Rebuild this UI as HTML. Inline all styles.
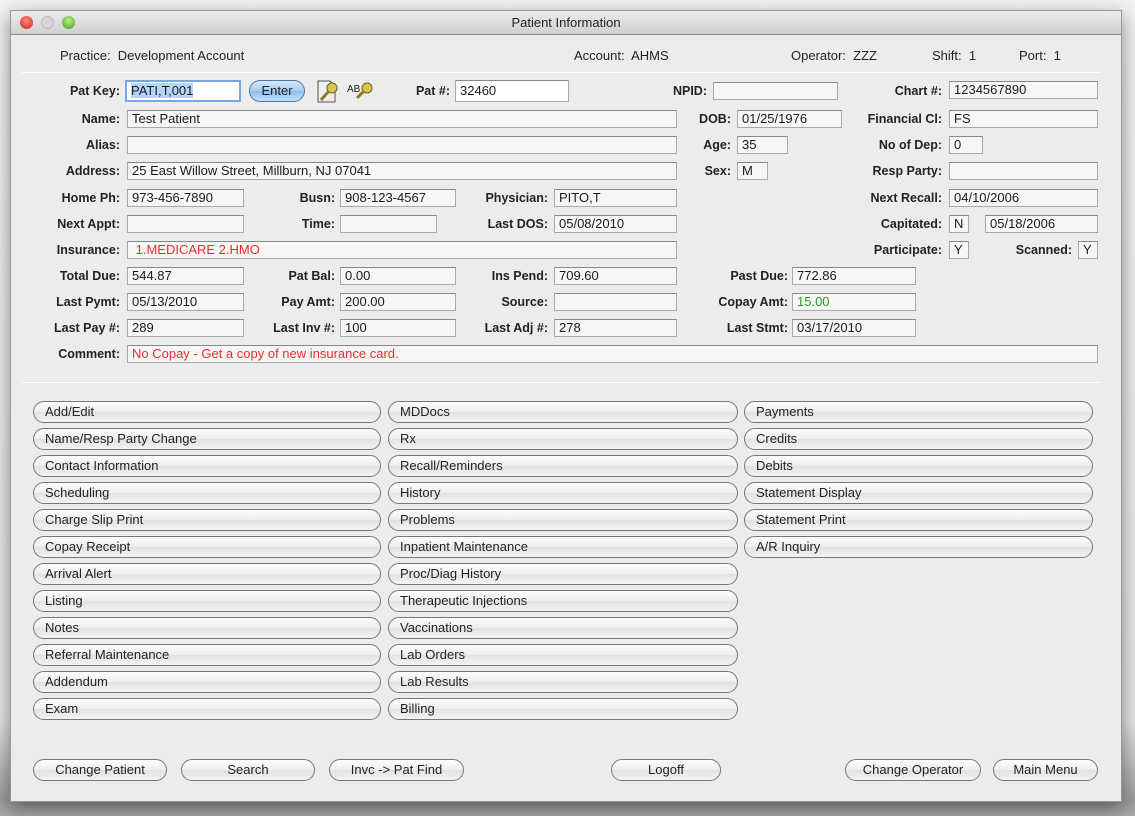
<!DOCTYPE html>
<html><head><meta charset="utf-8"><style>
*{box-sizing:border-box;margin:0;padding:0}
body{width:1135px;height:816px;background:linear-gradient(#f2f2f2 0,#e6e6e6 720px,#9e9e9e 800px,#a8a8a8 816px);font-family:"Liberation Sans",sans-serif;font-size:13px;color:#222;position:relative;overflow:hidden}
#win{position:absolute;left:10px;top:10px;width:1112px;height:792px;background:#ececec;box-shadow:0 6px 18px rgba(0,0,0,.45);border:1px solid #999}
#tb{position:absolute;left:0;top:0;width:100%;height:24px;background:linear-gradient(#ececec,#d0d0d0);border-bottom:1px solid #8a8a8a;text-align:center;font-size:13px;line-height:24px;color:#222}
.dot{position:absolute;top:5px;width:13px;height:13px;border-radius:50%}
.a{position:absolute;white-space:nowrap}
.l{position:absolute;font-weight:bold;text-align:right;white-space:nowrap;width:120px;line-height:18px;font-size:12.5px}
.f{position:absolute;height:18px;border:1px solid #a8a8a8;border-top-color:#888;background:#f6f6f6;padding-left:4px;line-height:16px;font-size:13px;white-space:nowrap;overflow:hidden;color:#1a1a1a}
.hr{position:absolute;left:22px;width:1078px;height:1px;background:#999;border-bottom:1px solid #fff}
.b{position:absolute;height:22px;border:1px solid #777;border-radius:11px;background:linear-gradient(#fdfdfd,#ededed 50%,#e2e2e2 51%,#f3f3f3);padding-left:11px;line-height:20px;white-space:nowrap}
.c{text-align:center;padding:0}
</style></head><body>
<div id="win">
<div id="tb">Patient Information</div>
<div class="dot" style="left:9px;background:radial-gradient(circle at 50% 35%,#ff8a80,#d0201a)"></div>
<div class="dot" style="left:30px;background:#d6d6d6;border:1px solid #bbb"></div>
<div class="dot" style="left:51px;background:radial-gradient(circle at 50% 35%,#b8f08a,#4a9a1e)"></div>
</div>
<div class="a" style="left:60px;top:48px">Practice:&nbsp; Development Account</div>
<div class="a" style="left:574px;top:48px">Account:&nbsp; AHMS</div>
<div class="a" style="left:791px;top:48px">Operator:&nbsp; ZZZ</div>
<div class="a" style="left:932px;top:48px">Shift:&nbsp; 1</div>
<div class="a" style="left:1019px;top:48px">Port:&nbsp; 1</div>
<div class="hr" style="top:72px"></div>

<div class="l" style="left:0;top:82px">Pat Key:</div>
<div class="f" style="left:125px;top:80px;width:116px;height:22px;background:#fff;border:2px solid #7aa7dc;line-height:18px"><span style="background:#b5d5ff">PATI,T,001</span></div>
<div class="b c" style="left:249px;top:80px;width:56px;background:linear-gradient(#d6e9fb,#a7cdf2 50%,#8dbdec 51%,#c5e2fb);border-color:#4f78a8">Enter</div>
<svg class="a" style="left:315px;top:78px" width="26" height="26" viewBox="0 0 26 26"><path d="M3 3h12l5 5v16H3z" fill="#eee" stroke="#555"/><circle cx="17" cy="10" r="5" fill="#d8c84a" stroke="#6a6020"/><path d="M13 14l-7 8" stroke="#8a7a20" stroke-width="3"/></svg>
<div class="a" style="left:347px;top:84px;font-size:10px">AB</div>
<svg class="a" style="left:355px;top:80px" width="20" height="20" viewBox="0 0 20 20"><circle cx="12" cy="8" r="5" fill="#d8c84a" stroke="#6a6020"/><path d="M8 12l-6 6" stroke="#8a7a20" stroke-width="3"/></svg>
<div class="l" style="left:330px;top:82px">Pat #:</div>
<div class="f" style="left:455px;top:80px;width:114px;height:22px;background:#fff;line-height:20px">32460</div>
<div class="l" style="left:587px;top:82px">NPID:</div>
<div class="f" style="left:713px;top:82px;width:125px"></div>
<div class="l" style="left:822px;top:82px">Chart #:</div>
<div class="f" style="left:949px;top:81px;width:149px">1234567890</div>

<div class="l" style="left:0;top:110px">Name:</div><div class="f" style="left:127px;top:110px;width:550px">Test Patient</div>
<div class="l" style="left:611px;top:110px">DOB:</div><div class="f" style="left:737px;top:110px;width:105px">01/25/1976</div>
<div class="l" style="left:822px;top:110px">Financial Cl:</div><div class="f" style="left:949px;top:110px;width:149px">FS</div>

<div class="l" style="left:0;top:136px">Alias:</div><div class="f" style="left:127px;top:136px;width:550px"></div>
<div class="l" style="left:611px;top:136px">Age:</div><div class="f" style="left:737px;top:136px;width:51px">35</div>
<div class="l" style="left:822px;top:136px">No of Dep:</div><div class="f" style="left:949px;top:136px;width:34px">0</div>

<div class="l" style="left:0;top:162px">Address:</div><div class="f" style="left:127px;top:162px;width:550px">25 East Willow Street, Millburn, NJ 07041</div>
<div class="l" style="left:611px;top:162px">Sex:</div><div class="f" style="left:737px;top:162px;width:31px">M</div>
<div class="l" style="left:822px;top:162px">Resp Party:</div><div class="f" style="left:949px;top:162px;width:149px"></div>

<div class="l" style="left:0;top:189px">Home Ph:</div><div class="f" style="left:127px;top:189px;width:117px">973-456-7890</div>
<div class="l" style="left:215px;top:189px">Busn:</div><div class="f" style="left:340px;top:189px;width:116px">908-123-4567</div>
<div class="l" style="left:428px;top:189px">Physician:</div><div class="f" style="left:554px;top:189px;width:123px">PITO,T</div>
<div class="l" style="left:822px;top:189px">Next Recall:</div><div class="f" style="left:949px;top:189px;width:149px">04/10/2006</div>

<div class="l" style="left:0;top:215px">Next Appt:</div><div class="f" style="left:127px;top:215px;width:117px"></div>
<div class="l" style="left:215px;top:215px">Time:</div><div class="f" style="left:340px;top:215px;width:97px"></div>
<div class="l" style="left:428px;top:215px">Last DOS:</div><div class="f" style="left:554px;top:215px;width:123px">05/08/2010</div>
<div class="l" style="left:822px;top:215px">Capitated:</div><div class="f" style="left:949px;top:215px;width:20px">N</div><div class="f" style="left:985px;top:215px;width:113px">05/18/2006</div>

<div class="l" style="left:0;top:241px">Insurance:</div><div class="f" style="left:127px;top:241px;width:550px;color:#e8302a">&nbsp;1.MEDICARE 2.HMO</div>
<div class="l" style="left:822px;top:241px">Participate:</div><div class="f" style="left:949px;top:241px;width:20px">Y</div>
<div class="l" style="left:952px;top:241px">Scanned:</div><div class="f" style="left:1078px;top:241px;width:20px">Y</div>

<div class="l" style="left:0;top:267px">Total Due:</div><div class="f" style="left:127px;top:267px;width:117px">544.87</div>
<div class="l" style="left:215px;top:267px">Pat Bal:</div><div class="f" style="left:340px;top:267px;width:116px">0.00</div>
<div class="l" style="left:428px;top:267px">Ins Pend:</div><div class="f" style="left:554px;top:267px;width:123px">709.60</div>
<div class="l" style="left:668px;top:267px">Past Due:</div><div class="f" style="left:792px;top:267px;width:124px">772.86</div>

<div class="l" style="left:0;top:293px">Last Pymt:</div><div class="f" style="left:127px;top:293px;width:117px">05/13/2010</div>
<div class="l" style="left:215px;top:293px">Pay Amt:</div><div class="f" style="left:340px;top:293px;width:116px">200.00</div>
<div class="l" style="left:428px;top:293px">Source:</div><div class="f" style="left:554px;top:293px;width:123px"></div>
<div class="l" style="left:668px;top:293px">Copay Amt:</div><div class="f" style="left:792px;top:293px;width:124px;color:#2a9a2a">15.00</div>

<div class="l" style="left:0;top:319px">Last Pay #:</div><div class="f" style="left:127px;top:319px;width:117px">289</div>
<div class="l" style="left:215px;top:319px">Last Inv #:</div><div class="f" style="left:340px;top:319px;width:116px">100</div>
<div class="l" style="left:428px;top:319px">Last Adj #:</div><div class="f" style="left:554px;top:319px;width:123px">278</div>
<div class="l" style="left:668px;top:319px">Last Stmt:</div><div class="f" style="left:792px;top:319px;width:124px">03/17/2010</div>

<div class="l" style="left:0;top:345px">Comment:</div><div class="f" style="left:127px;top:345px;width:971px;color:#e8302a">No Copay - Get a copy of new insurance card.</div>

<div class="hr" style="top:382px"></div>

<div class="b" style="left:33px;top:401px;width:348px">Add/Edit</div>
<div class="b" style="left:33px;top:428px;width:348px">Name/Resp Party Change</div>
<div class="b" style="left:33px;top:455px;width:348px">Contact Information</div>
<div class="b" style="left:33px;top:482px;width:348px">Scheduling</div>
<div class="b" style="left:33px;top:509px;width:348px">Charge Slip Print</div>
<div class="b" style="left:33px;top:536px;width:348px">Copay Receipt</div>
<div class="b" style="left:33px;top:563px;width:348px">Arrival Alert</div>
<div class="b" style="left:33px;top:590px;width:348px">Listing</div>
<div class="b" style="left:33px;top:617px;width:348px">Notes</div>
<div class="b" style="left:33px;top:644px;width:348px">Referral Maintenance</div>
<div class="b" style="left:33px;top:671px;width:348px">Addendum</div>
<div class="b" style="left:33px;top:698px;width:348px">Exam</div>

<div class="b" style="left:388px;top:401px;width:350px">MDDocs</div>
<div class="b" style="left:388px;top:428px;width:350px">Rx</div>
<div class="b" style="left:388px;top:455px;width:350px">Recall/Reminders</div>
<div class="b" style="left:388px;top:482px;width:350px">History</div>
<div class="b" style="left:388px;top:509px;width:350px">Problems</div>
<div class="b" style="left:388px;top:536px;width:350px">Inpatient Maintenance</div>
<div class="b" style="left:388px;top:563px;width:350px">Proc/Diag History</div>
<div class="b" style="left:388px;top:590px;width:350px">Therapeutic Injections</div>
<div class="b" style="left:388px;top:617px;width:350px">Vaccinations</div>
<div class="b" style="left:388px;top:644px;width:350px">Lab Orders</div>
<div class="b" style="left:388px;top:671px;width:350px">Lab Results</div>
<div class="b" style="left:388px;top:698px;width:350px">Billing</div>

<div class="b" style="left:744px;top:401px;width:349px">Payments</div>
<div class="b" style="left:744px;top:428px;width:349px">Credits</div>
<div class="b" style="left:744px;top:455px;width:349px">Debits</div>
<div class="b" style="left:744px;top:482px;width:349px">Statement Display</div>
<div class="b" style="left:744px;top:509px;width:349px">Statement Print</div>
<div class="b" style="left:744px;top:536px;width:349px">A/R Inquiry</div>

<div class="b c" style="left:33px;top:759px;width:134px">Change Patient</div>
<div class="b c" style="left:181px;top:759px;width:134px">Search</div>
<div class="b c" style="left:329px;top:759px;width:135px">Invc -&gt; Pat Find</div>
<div class="b c" style="left:611px;top:759px;width:110px">Logoff</div>
<div class="b c" style="left:845px;top:759px;width:136px">Change Operator</div>
<div class="b c" style="left:993px;top:759px;width:105px">Main Menu</div>
</body></html>
